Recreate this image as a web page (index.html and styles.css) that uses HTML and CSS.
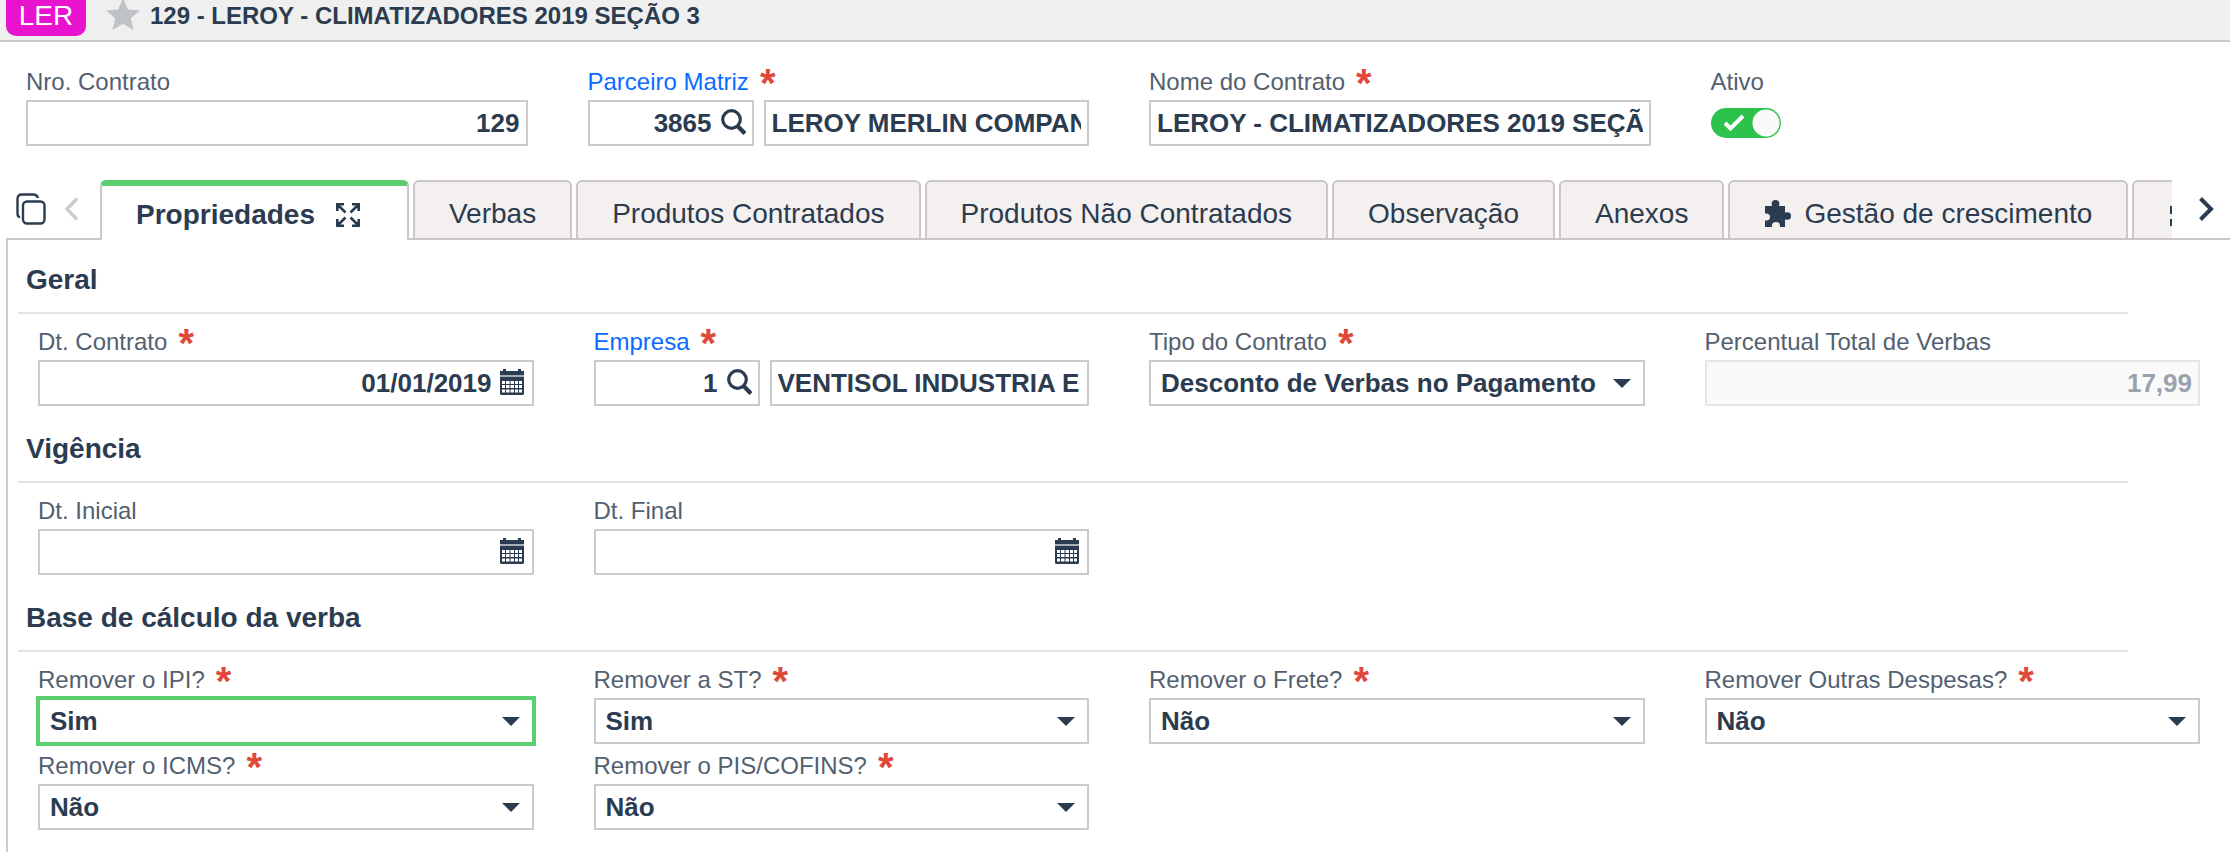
FILE: index.html
```
<!DOCTYPE html>
<html lang="pt-BR">
<head>
<meta charset="utf-8">
<title>129 - LEROY - CLIMATIZADORES 2019 SEÇÃO 3</title>
<link rel="stylesheet" href="styles.css">
</head>
<body>
<svg class="sprite" aria-hidden="true">
  <symbol id="i-search" viewBox="-1 0 26 26"><circle cx="10.500" cy="10.500" r="8.800" fill="none" stroke="currentColor" stroke-width="3.200"/><path d="M16.500 17L24 24.500" stroke="currentColor" stroke-width="4.400"/></symbol>
  <symbol id="i-calendar" viewBox="1 0 26 26"><path fill="currentColor" fill-rule="evenodd" d="M4 0h3v2h12V0h3v2h3v4H1V2h3zM1 8h24v16.500q0 1.500-1.500 1.500h-21Q1 26 1 24.500zM3 12v3h3v-3zM7 12v3h3.500v-3zM11.500 12v3H15v-3zM16 12v3h3v-3zM20 12v3h3v-3zM3 16v3h3v-3zM7 16v3h3.500v-3zM11.500 16v3H15v-3zM16 16v3h3v-3zM20 16v3h3v-3zM3 20.500v3h3v-3zM7 20.500v3h3.500v-3zM11.500 20.500v3H15v-3zM16 20.500v3h3v-3zM20 20.500v3h3v-3z"/><path d="M1 7h24" stroke="#a7afb8" stroke-width="2"/></symbol>
</svg>

<header class="topbar">
  <span class="badge">LER</span>
  <button class="star" aria-label="Favorito"><svg viewBox="0 0 34 30"><path fill="#bfc3c8" d="M17-2l4.800 11.400L34 10.400l-9.300 8L27.600 30 17 23.700 6.400 30l2.900-11.600L0 10.400l12.200-1z"/></svg></button>
  <h1 class="title">129 - LEROY - CLIMATIZADORES 2019 SEÇÃO 3</h1>
</header>

<form class="record">
  <div class="field">
    <div class="label-row"><label for="nro">Nro. Contrato</label></div>
    <div class="control"><input class="num" id="nro" value="129"></div>
  </div>
  <div class="field">
    <div class="label-row"><label for="parc"><a href="#parc">Parceiro Matriz</a></label><span class="req">*</span></div>
    <div class="pair">
      <div class="control code"><input class="num" id="parc" value="3865"><button type="button" class="icon-btn" aria-label="Pesquisar parceiro"><svg><use href="#i-search"/></svg></button></div>
      <div class="control"><input value="LEROY MERLIN COMPANHIA BRASILEIRA" aria-label="Nome do parceiro"></div>
    </div>
  </div>
  <div class="field">
    <div class="label-row"><label for="nome">Nome do Contrato</label><span class="req">*</span></div>
    <div class="control"><input id="nome" value="LEROY - CLIMATIZADORES 2019 SEÇÃO 3"></div>
  </div>
  <div class="field">
    <div class="label-row"><label for="ativo">Ativo</label></div>
    <div class="toggle">
      <input type="checkbox" id="ativo" checked>
      <svg viewBox="0 0 22 18"><path d="M2 9l5.500 5.500L20 2" fill="none" stroke="#fff" stroke-width="4"/></svg>
    </div>
  </div>
</form>

<nav class="tabs">
  <div class="tabs-start">
    <button class="tool" aria-label="Copiar"><svg class="copy" viewBox="0 0 30 32"><g fill="none" stroke="currentColor" stroke-width="2.400"><rect x="7" y="8.500" width="21.500" height="22" rx="4"/><path d="M4 24.500q-2.500-1-2.500-4V6q0-4.500 4.500-4.500h11q4 0 5 3.500"/></g></svg></button>
    <button class="tool" aria-label="Aba anterior"><svg class="chev" viewBox="0 0 15 24"><path d="M13 1.500L3 12l10 10.500" fill="none" stroke="#c9cdd2" stroke-width="3.400"/></svg></button>
  </div>
  <div class="tab-list">
    <button class="tab active">Propriedades<svg class="expand" viewBox="0 0 26 26"><g fill="none" stroke="currentColor" stroke-width="2.600"><path d="M2.300 9V2.300H9M17 2.300h6.700V9M23.700 17v6.700H17M9 23.700H2.300V17M3 3l7.500 7.500M23 3l-7.500 7.500M23 23l-7.500-7.500M3 23l7.500-7.500"/></g></svg></button>
    <button class="tab">Verbas</button>
    <button class="tab">Produtos Contratados</button>
    <button class="tab">Produtos Não Contratados</button>
    <button class="tab">Observação</button>
    <button class="tab">Anexos</button>
    <button class="tab"><svg class="puzzle" viewBox="-1 1 26 27"><path fill="currentColor" d="M0 6h7Q5.500 0 10.500 0T14 6h6v6.500q6-1.500 6 3.500t-6 3.500V27h-5q.5-5-4-5t-4 5H0v-6.500q5 .5 5-3.500t-5-3.500z"/></svg>Gestão de crescimento</button>
    <button class="tab" aria-label="Mais"><svg class="grid-icon" viewBox="0 0 26 26"><path fill="currentColor" d="M2 5h9v8H2zM2 18h9v7H2zM15 5h9v8h-9zM15 18h9v7h-9z"/></svg></button>
  </div>
  <div class="tabs-end"><button class="tool" aria-label="Próxima aba"><svg class="chev" viewBox="0 0 15 24"><path d="M1.500 1.500L12 12 1.500 22.500" fill="none" stroke="currentColor" stroke-width="4"/></svg></button></div>
</nav>

<main class="panel">
  <section>
    <h2>Geral</h2>
    <div class="fields">
      <div class="field">
        <div class="label-row"><label for="dtc">Dt. Contrato</label><span class="req">*</span></div>
        <div class="control"><input class="num" id="dtc" value="01/01/2019"><button class="icon-btn" aria-label="Abrir calendário"><svg><use href="#i-calendar"/></svg></button></div>
      </div>
      <div class="field">
        <div class="label-row"><label for="emp"><a href="#emp">Empresa</a></label><span class="req">*</span></div>
        <div class="pair">
          <div class="control code"><input class="num" id="emp" value="1"><button class="icon-btn" aria-label="Pesquisar empresa"><svg><use href="#i-search"/></svg></button></div>
          <div class="control"><input value="VENTISOL INDUSTRIA E" aria-label="Nome da empresa"></div>
        </div>
      </div>
      <div class="field">
        <div class="label-row"><label for="tipo">Tipo do Contrato</label><span class="req">*</span></div>
        <select id="tipo"><option>Desconto de Verbas no Pagamento</option></select>
      </div>
      <div class="field">
        <div class="label-row"><label for="perc">Percentual Total de Verbas</label></div>
        <div class="control disabled"><input class="num" id="perc" value="17,99" disabled></div>
      </div>
    </div>
  </section>
  <section>
    <h2>Vigência</h2>
    <div class="fields">
      <div class="field">
        <div class="label-row"><label for="dti">Dt. Inicial</label></div>
        <div class="control"><input class="num" id="dti"><button class="icon-btn" aria-label="Abrir calendário"><svg><use href="#i-calendar"/></svg></button></div>
      </div>
      <div class="field">
        <div class="label-row"><label for="dtf">Dt. Final</label></div>
        <div class="control"><input class="num" id="dtf"><button class="icon-btn" aria-label="Abrir calendário"><svg><use href="#i-calendar"/></svg></button></div>
      </div>
    </div>
  </section>
  <section>
    <h2>Base de cálculo da verba</h2>
    <div class="fields">
      <div class="field">
        <div class="label-row"><label for="ipi">Remover o IPI?</label><span class="req">*</span></div>
        <select id="ipi" class="current"><option>Sim</option><option>Não</option></select>
      </div>
      <div class="field">
        <div class="label-row"><label for="st">Remover a ST?</label><span class="req">*</span></div>
        <select id="st"><option>Sim</option><option>Não</option></select>
      </div>
      <div class="field">
        <div class="label-row"><label for="frete">Remover o Frete?</label><span class="req">*</span></div>
        <select id="frete"><option>Não</option><option>Sim</option></select>
      </div>
      <div class="field">
        <div class="label-row"><label for="outras">Remover Outras Despesas?</label><span class="req">*</span></div>
        <select id="outras"><option>Não</option><option>Sim</option></select>
      </div>
      <div class="field">
        <div class="label-row"><label for="icms">Remover o ICMS?</label><span class="req">*</span></div>
        <select id="icms"><option>Não</option><option>Sim</option></select>
      </div>
      <div class="field">
        <div class="label-row"><label for="pis">Remover o PIS/COFINS?</label><span class="req">*</span></div>
        <select id="pis"><option>Não</option><option>Sim</option></select>
      </div>
    </div>
  </section>
</main>
</body>
</html>
```
FILE: styles.css
```
* { box-sizing: border-box; }

:root {
  --ink: #2c3c50;
  --label: #526070;
  --line: #cbcbcb;
  --tab-line: #cdc6c8;
  --green: #5acd6e;
}

html { height: 100%; }

body {
  margin: 0;
  min-height: 100%;
  display: flex;
  flex-direction: column;
  background: #fff;
  color: var(--ink);
  font: 24px "Liberation Sans", Arial, sans-serif;
}

button, input, select { font: inherit; color: inherit; }

button {
  padding: 0;
  border: 0;
  background: none;
  display: flex;
  align-items: center;
}

a { color: #0a6cff; text-decoration: none; }

.sprite { display: none; }

/* Title bar */
.topbar {
  height: 42px;
  padding: 0 6px;
  display: flex;
  align-items: flex-start;
  background: #efefef;
  border-bottom: 2px solid var(--line);
}

.badge {
  width: 80px;
  height: 36px;
  border-radius: 0 0 10px 10px;
  background: #e813cf;
  color: #fff;
  font-size: 28px;
  line-height: 32px;
  text-align: center;
}

.star { margin: 0 10px 0 20px; }
.star svg { width: 34px; height: 30px; }

.title { margin: 0; font-size: 24px; line-height: 32px; }

/* Fields */
.record {
  padding: 26px 18px 34px 26px;
  display: grid;
  grid-template-columns: repeat(4, minmax(0, 1fr));
  gap: 8px 60px;
}

.field {
  display: flex;
  flex-direction: column;
  gap: 4px;
  min-width: 0;
}

.label-row {
  height: 28px;
  display: flex;
  gap: 11px;
  line-height: 28px;
  color: var(--label);
  white-space: nowrap;
}

.req {
  color: #e0483c;
  font-size: 40px;
  font-weight: bold;
  line-height: 30px;
}

.control {
  flex: 1;
  min-width: 0;
  min-height: 46px;
  display: flex;
  align-items: center;
  border: 2px solid var(--line);
  background: #fff;
}

.control input {
  flex: 1;
  width: 0;
  height: 42px;
  border: 0;
  padding: 0;
  margin: 0 6px;
  background: none;
  outline: 0;
  font-size: 26px;
  font-weight: bold;
}

.control .num { text-align: right; }

.control.disabled {
  border-color: #e6e6e6;
  background: #fafafa;
  color: #9aa2ab;
}

.pair { display: flex; gap: 10px; }
.pair .code { flex: 0 0 166px; }

.icon-btn { margin: 0 6px 0 2px; }
.icon-btn svg { width: 26px; height: 26px; margin-bottom: 3px; }

select {
  appearance: none;
  width: 100%;
  height: 46px;
  padding: 0 40px 0 10px;
  border: 2px solid var(--line);
  border-radius: 0;
  background: #fff url("data:image/svg+xml,%3Csvg xmlns='http://www.w3.org/2000/svg' width='18' height='9'%3E%3Cpath d='M0 0h18L9 9z' fill='%232c3c50'/%3E%3C/svg%3E") no-repeat right 12px center;
  font-size: 26px;
  font-weight: bold;
  outline: 0;
}

select.current { border-color: var(--green); box-shadow: 0 0 0 2px var(--green); }

.toggle {
  display: grid;
  align-items: center;
  height: 46px;
  width: 70px;
}

.toggle input {
  grid-area: 1 / 1;
  appearance: none;
  margin: 0;
  width: 70px;
  height: 30px;
  border-radius: 15px;
  background: radial-gradient(circle at 55px 15px, #fafafa 13px, transparent 14px) #2dc24b;
}

.toggle svg {
  grid-area: 1 / 1;
  width: 22px;
  height: 18px;
  margin-left: 12px;
  pointer-events: none;
}

/* Tabs */
.tabs {
  height: 60px;
  margin-left: 6px;
  display: flex;
  box-shadow: inset 0 -2px var(--tab-line);
}

.tabs-start {
  width: 94px;
  padding-left: 10px;
  display: flex;
  gap: 18px;
  flex: none;
}

.tabs-end {
  flex: 0 0 58px;
  padding-left: 27px;
  display: flex;
}

.tool { padding-bottom: 2px; height: 60px; }
.copy { width: 30px; height: 32px; }
.chev { width: 15px; height: 24px; }

.tab-list {
  flex: 1;
  min-width: 0;
  display: flex;
  gap: 4px;
  overflow: hidden;
}

.tab {
  flex: none;
  height: 60px;
  padding: 8px 34px 0;
  border: 2px solid var(--tab-line);
  border-radius: 6px 6px 0 0;
  background: #f4f0ef;
  font-size: 28px;
  white-space: nowrap;
}

.tab.active {
  padding: 4px 46px 0 34px;
  border-top: 6px solid var(--green);
  border-bottom: 0;
  background: #fff;
  font-weight: bold;
}

.expand { width: 26px; height: 26px; margin-left: 20px; }
.puzzle { width: 26px; height: 27px; margin-right: 14px; overflow: visible; }
.grid-icon { width: 26px; height: 26px; }

/* Panel */
.panel {
  flex: 1;
  margin-left: 6px;
  padding-left: 10px;
  border-left: 2px solid var(--line);
}

section + section { margin-top: 3px; }

h2 {
  margin: 0 102px 0 0;
  padding: 24px 8px 16px;
  border-bottom: 2px solid #e3e3e3;
  font-size: 28px;
  line-height: 32px;
}

.fields {
  padding: 14px 30px 0 20px;
  display: grid;
  grid-template-columns: repeat(4, minmax(0, 1fr));
  gap: 8px 60px;
}
```
